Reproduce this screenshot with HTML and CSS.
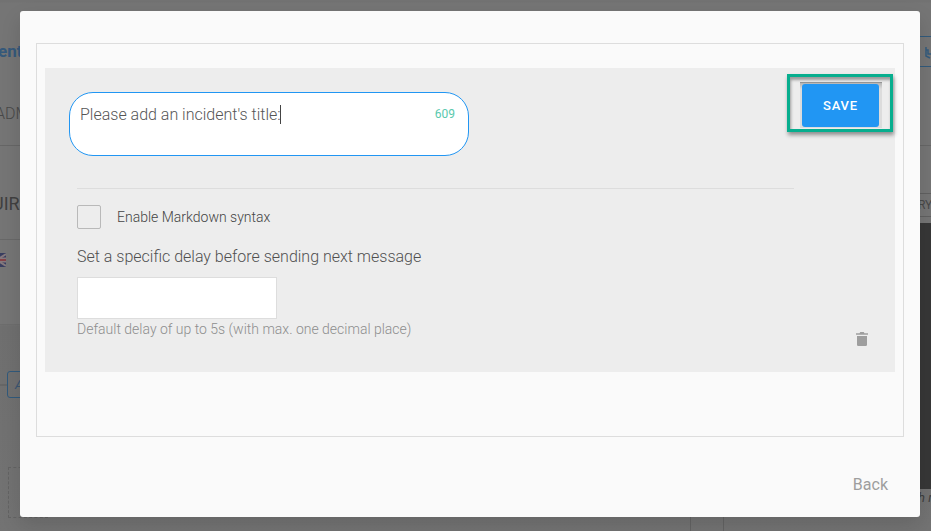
FILE: index.html
```
<!DOCTYPE html>
<html lang="en">
<head>
<meta charset="utf-8">
<title>Edit message</title>
<link rel="stylesheet" href="styles.css">
</head>
<body>
<div class="page">
  <div class="edge edge-left">
    <div class="crumb">ent</div>
    <div class="tab">ADM</div>
    <div class="section">UIR</div>
    <div class="lang">
      <svg width="6" height="14" viewBox="0 0 6 14"><path fill="#383e60" d="M0 0h6v14H0z"/><path stroke="#85797d" stroke-width="2" d="M-3 7L6 1M-3 7l9 6"/><path fill="#85797d" d="M0 4.500h6v5H0z"/><path fill="#874347" d="M0 6h6v2H0z"/></svg>
    </div>
    <div class="node-row"><span class="wire"></span><span class="node">A</span></div>
    <div class="drop"></div>
  </div>
  <div class="under"><span class="gutter"></span></div>
  <div class="edge edge-right">
    <div class="tool"><svg width="6" height="14" viewBox="0 0 6 14"><path d="M1 1v9l4 2M1 4h2v4h3" fill="none" stroke="#335b7d" stroke-width="1.5"/></svg></div>
    <div class="rule"></div>
    <div class="try">RY</div>
    <div class="preview"></div>
    <div class="note">h r</div>
  </div>
</div>
<div class="modal">
  <div class="frame">
    <div class="panel">
      <div class="top">
        <div class="bubble">
          <span class="message">Please add an incident's title:<i class="caret"></i></span>
          <span class="count">609</span>
        </div>
        <div class="highlight"><div class="well"><button class="save">SAVE</button></div></div>
      </div>
      <div class="options">
        <label class="check"><span class="box"></span>Enable Markdown syntax</label>
        <div class="label">Set a specific delay before sending next message</div>
        <input class="delay" type="text" aria-label="Delay">
        <div class="hint">Default delay of up to 5s (with max. one decimal place)</div>
      </div>
      <svg class="trash" width="12" height="14" viewBox="0 0 12 14"><path fill="#9e9e9e" d="M0 1.300h3.500L4.300 0h3.400l.8 1.300H12v1.400H0zM1 4h10v8.700q0 1.300-1.300 1.300H2.300Q1 14 1 12.700z"/></svg>
    </div>
  </div>
  <div class="footer"><span class="back">Back</span></div>
</div>
</body>
</html>
```
FILE: styles.css
```
* { box-sizing: border-box; }
body { margin: 0; height: 531px; overflow: hidden; background: #747474; font-family: Roboto, sans-serif; }
.page { display: grid; grid-template-columns: 20px 900px 11px; height: 531px; background: linear-gradient(#727272, #727272 2px, #757575 3px, #757575 324px, #6f6f6f 326px, #737373); }
.edge { white-space: nowrap; display: flex; flex-direction: column; min-width: 0; }
.crumb { height: 62px; padding-top: 40px; margin-left: -2px; font-size: 17px; line-height: 22px; font-weight: 700; color: #35597b; }
.tab { height: 84px; padding-top: 41px; font-size: 16px; line-height: 21px; font-weight: 300; color: #484848; border-bottom: 1px solid #666; text-indent: -5px; }
.section { height: 94px; padding-top: 47px; font-size: 18px; line-height: 22px; color: #404040; border-bottom: 1px solid #686868; text-indent: -8px; }
.lang { height: 85px; padding-top: 12px; border-bottom: 1px solid #6d6d6d; }
.node-row { display: flex; align-items: center; margin-top: 46px; height: 27px; }
.wire { flex: none; width: 7px; height: 2px; background: #666; }
.node { flex: none; width: 30px; height: 27px; padding-left: 7px; border: 1px solid #315a7c; border-radius: 3px; font-size: 13px; line-height: 25px; font-style: italic; color: #3a5673; }
.drop { margin: 69px 0 0 8px; width: 40px; height: 51px; border: 1px dashed #636363; }
.under { display: flex; align-items: flex-end; padding-left: 670px; }
.gutter { width: 34px; height: 14px; border: solid #636363; border-width: 0 1px; }
.tool { margin-top: 36px; height: 31px; padding: 8px 0 0 5px; border: solid #315a7c; border-width: 1px 0; }
.rule { margin-top: 78px; border-top: 1px solid #666; }
.try { margin-top: 47px; height: 24px; border: solid #606060; border-width: 1px 0; font-size: 12px; line-height: 22px; color: #484848; text-indent: -2px; }
.preview { margin-top: 6px; height: 266px; background: #373737; }
.note { font-size: 13px; line-height: 17px; font-style: italic; color: #3e3e3e; text-indent: -2px; }
.modal { position: absolute; left: 20px; top: 11px; width: 900px; height: 506px; padding: 32px 16px 0; border-radius: 3px; background: #fafafa; box-shadow: 0 8px 20px rgba(0,0,0,.12); }
.frame { height: 394px; border: 1px solid #ddd; padding: 24px 8px 0; }
.panel { height: 304px; background: #ededed; display: flex; flex-direction: column; }
.top { display: flex; justify-content: space-between; align-items: flex-start; padding: 6px 2px 0 24px; height: 88px; }
.bubble { display: flex; justify-content: space-between; width: 400px; height: 64px; margin-top: 18px; padding: 11px 13px 0 10px; border: 1px solid #2196f3; border-radius: 24px; background: #fff; }
.message { display: flex; font-size: 16px; line-height: 21px; font-weight: 300; color: #555; }
.caret { width: 1px; height: 19px; margin: 1px 0 0 -1px; background: #444; }
.count { font-size: 12px; line-height: 21px; color: #5ac9ae; }
.highlight { width: 106px; height: 58px; border: 3px solid #07ae8e; padding: 5px 0 0 10px; box-shadow: 1px 3px 4px rgba(0,0,0,.4), inset 1px 3px 3px rgba(0,0,0,.35); }
.well { width: 82px; height: 46px; padding: 1px 3px 0 2px; border-top: 1px solid #949494; background: linear-gradient(#b5b5b5, #dcdcdc 6px); }
.save { display: block; width: 77px; height: 43px; padding: 0; border: 0; border-radius: 3px; background: #2196f3; color: #fff; font: 500 13px/43px Roboto, sans-serif; letter-spacing: .8px; }
.options { width: 717px; height: 152px; margin: 32px 0 0 32px; border-top: 1px solid #ddd; padding-top: 16px; }
.check { display: flex; align-items: center; gap: 16px; height: 24px; font-size: 14px; font-weight: 300; color: #444; }
.box { width: 24px; height: 24px; border: 1px solid #b9b9b9; border-radius: 2px; }
.label { margin-top: 16px; height: 32px; font-size: 16px; line-height: 23px; font-weight: 300; color: #505050; }
.delay { display: block; width: 200px; height: 42px; border: 1px solid #ddd; background: #fff; }
.hint { font-size: 14px; line-height: 20px; font-weight: 300; color: #8e8e8e; }
.trash { align-self: flex-end; margin: -8px 27px 0 0; }
.footer { display: flex; justify-content: flex-end; padding: 37px 16px 0 0; }
.back { font-size: 16px; line-height: 21px; color: #9e9e9e; }
```
